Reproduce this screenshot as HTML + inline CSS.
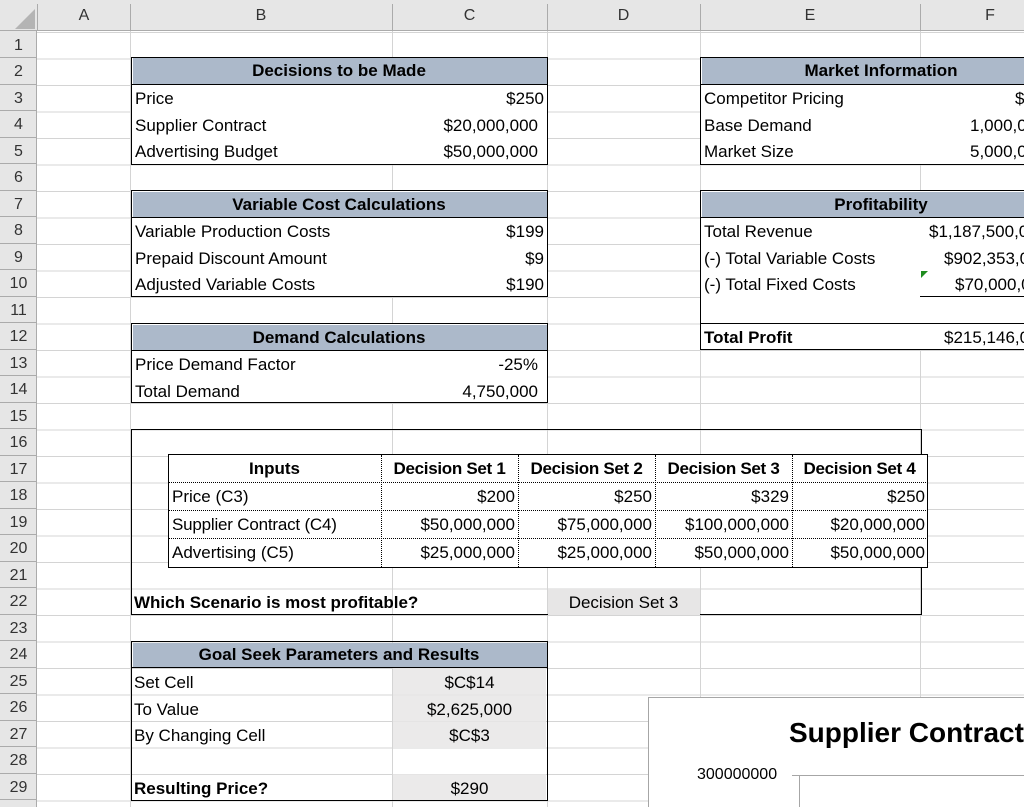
<!DOCTYPE html>
<html><head><meta charset="utf-8"><style>
*{margin:0;padding:0;box-sizing:border-box}
html,body{width:1024px;height:807px;overflow:hidden;background:#fff}
body{position:relative;font-family:"Liberation Sans",Arial,sans-serif;font-size:17px;color:#000}
.grid{position:absolute;left:0;top:31.5px;width:1024px;height:790px;
background-image:repeating-linear-gradient(to bottom,#d4d4d4 0,#d4d4d4 1px,transparent 1px,transparent 26.5px)}
.v{position:absolute;top:0;width:1px;height:807px;background:#d4d4d4}
.hdr{position:absolute;left:0;top:0;width:1024px;height:31px;background:#e6e6e6;border-bottom:1px solid #ababab}
.hl{position:absolute;top:0;height:31px;line-height:31px;text-align:center;color:#333;font-size:16px}
.hs{position:absolute;top:4px;width:1px;height:27px;background:#ababab}
.rh{position:absolute;left:0;top:31px;width:37px;height:776px;background:#e6e6e6;border-right:1px solid #ababab}
.rn{position:absolute;left:0;width:37px;text-align:center;height:26.5px;line-height:27px;color:#333;font-size:16px;border-bottom:1px solid #ababab}
.box{position:absolute;border:1.5px solid #000;background:#fff}
.fill{position:absolute;background:#acb9ca}
.gfill{position:absolute;background:#e7e6e6}
.t{position:absolute;height:26px;line-height:30px;white-space:nowrap}
.b{font-weight:bold}
.r{text-align:right}.c{text-align:center}
.hline{position:absolute;height:1.5px;background:#000}
</style></head><body>
<div class="grid"></div>
<div class="v" style="left:130px"></div><div class="v" style="left:392px"></div><div class="v" style="left:547px"></div><div class="v" style="left:700px"></div><div class="v" style="left:920px"></div>

<div class="hdr"></div>
<svg style="position:absolute;left:14px;top:8px" width="22" height="22"><polygon points="21,1 21,21 1,21" fill="#b4b4b4"/></svg>
<div class="hs" style="left:37px"></div><div class="hs" style="left:130px"></div><div class="hs" style="left:392px"></div><div class="hs" style="left:547px"></div><div class="hs" style="left:700px"></div><div class="hs" style="left:920px"></div>
<div class="hl" style="left:38px;width:92px">A</div>
<div class="hl" style="left:130px;width:262px">B</div>
<div class="hl" style="left:392px;width:155px">C</div>
<div class="hl" style="left:547px;width:153px">D</div>
<div class="hl" style="left:700px;width:220px">E</div>
<div class="hl" style="left:920px;width:140px">F</div>
<div class="rh"></div>
<div class="rn" style="top:31.5px">1</div><div class="rn" style="top:58px">2</div><div class="rn" style="top:84.5px">3</div><div class="rn" style="top:111px">4</div><div class="rn" style="top:137.5px">5</div><div class="rn" style="top:164px">6</div><div class="rn" style="top:190.5px">7</div><div class="rn" style="top:217px">8</div><div class="rn" style="top:243.5px">9</div><div class="rn" style="top:270px">10</div><div class="rn" style="top:296.5px">11</div><div class="rn" style="top:323px">12</div><div class="rn" style="top:349.5px">13</div><div class="rn" style="top:376px">14</div><div class="rn" style="top:402.5px">15</div><div class="rn" style="top:429px">16</div><div class="rn" style="top:455.5px">17</div><div class="rn" style="top:482px">18</div><div class="rn" style="top:508.5px">19</div><div class="rn" style="top:535px">20</div><div class="rn" style="top:561.5px">21</div><div class="rn" style="top:588px">22</div><div class="rn" style="top:614.5px">23</div><div class="rn" style="top:641px">24</div><div class="rn" style="top:667.5px">25</div><div class="rn" style="top:694px">26</div><div class="rn" style="top:720.5px">27</div><div class="rn" style="top:747px">28</div><div class="rn" style="top:773.5px">29</div><div class="rn" style="top:800px">30</div>

<div class="box" style="left:131px;top:56.5px;width:417px;height:108px"></div>
<div class="fill" style="left:132.5px;top:58px;width:414px;height:26px"></div>
<div class="hline" style="left:131px;top:83.5px;width:416px;height:1px"></div>
<div class="t b c" style="left:131px;top:56px;width:416px">Decisions to be Made</div>
<div class="t" style="left:135px;top:84px">Price</div><div class="t r" style="left:392px;top:84px;width:152px">$250</div>
<div class="t" style="left:135px;top:110.5px">Supplier Contract</div><div class="t r" style="left:392px;top:110.5px;width:146px">$20,000,000</div>
<div class="t" style="left:135px;top:137px">Advertising Budget</div><div class="t r" style="left:392px;top:137px;width:146px">$50,000,000</div>

<div class="box" style="left:700px;top:56.5px;width:340px;height:108px"></div>
<div class="fill" style="left:701.5px;top:58px;width:330px;height:26px"></div>
<div class="hline" style="left:700px;top:83.5px;width:330px;height:1px"></div>
<div class="t b c" style="left:700px;top:56px;width:362px">Market Information</div>
<div class="t" style="left:704px;top:84px">Competitor Pricing</div><div class="t" style="left:1015px;top:84px">$250</div>
<div class="t" style="left:704px;top:110.5px">Base Demand</div><div class="t" style="left:970px;top:110.5px">1,000,000</div>
<div class="t" style="left:704px;top:137px">Market Size</div><div class="t" style="left:970px;top:137px">5,000,000</div>

<div class="box" style="left:131px;top:190px;width:417px;height:107px"></div>
<div class="fill" style="left:132.5px;top:191.5px;width:414px;height:26px"></div>
<div class="hline" style="left:131px;top:216.5px;width:416px;height:1px"></div>
<div class="t b c" style="left:131px;top:189.5px;width:416px">Variable Cost Calculations</div>
<div class="t" style="left:135px;top:217px">Variable Production Costs</div><div class="t r" style="left:392px;top:217px;width:152px">$199</div>
<div class="t" style="left:135px;top:243.5px">Prepaid Discount Amount</div><div class="t r" style="left:392px;top:243.5px;width:152px">$9</div>
<div class="t" style="left:135px;top:270px">Adjusted Variable Costs</div><div class="t r" style="left:392px;top:270px;width:152px">$190</div>

<div class="box" style="left:700px;top:190px;width:340px;height:160px"></div>
<div class="fill" style="left:701.5px;top:191.5px;width:330px;height:26px"></div>
<div class="hline" style="left:700px;top:216.5px;width:330px;height:1px"></div>
<div class="hline" style="left:920px;top:296px;width:110px;height:1px"></div>
<div class="hline" style="left:700px;top:322.5px;width:330px"></div>
<div class="t b c" style="left:700px;top:189.5px;width:362px">Profitability</div>
<div class="t" style="left:704px;top:217px">Total Revenue</div><div class="t" style="left:929px;top:217px">$1,187,500,000</div>
<div class="t" style="left:704px;top:243.5px">(-) Total Variable Costs</div><div class="t" style="left:944px;top:243.5px">$902,353,000</div>
<div class="t" style="left:704px;top:270px">(-) Total Fixed Costs</div><div class="t" style="left:955px;top:270px">$70,000,000</div>
<svg style="position:absolute;left:921px;top:271px" width="8" height="8"><polygon points="0,0 7,0 0,7" fill="#1e8c1e"/></svg>
<div class="t b" style="left:704px;top:323px">Total Profit</div><div class="t" style="left:944px;top:323px">$215,146,000</div>

<div class="box" style="left:131px;top:323px;width:417px;height:80px"></div>
<div class="fill" style="left:132.5px;top:324.5px;width:414px;height:26px"></div>
<div class="hline" style="left:131px;top:349.5px;width:416px;height:1px"></div>
<div class="t b c" style="left:131px;top:322.5px;width:416px">Demand Calculations</div>
<div class="t" style="left:135px;top:350px">Price Demand Factor</div><div class="t r" style="left:392px;top:350px;width:146px">-25%</div>
<div class="t" style="left:135px;top:376.5px">Total Demand</div><div class="t r" style="left:392px;top:376.5px;width:146px">4,750,000</div>

<div style="position:absolute;left:131px;top:429px;width:791px;height:186px;border:1.5px solid #000;border-left-width:1px;background:transparent"></div>
<div style="position:absolute;left:168px;top:454px;width:760px;height:114px;background:#fff;border:1.5px solid #000"></div>
<div style="position:absolute;left:169px;top:482px;width:757px;border-top:1px dotted #000"></div>
<div style="position:absolute;left:169px;top:510px;width:757px;border-top:1px dotted #000"></div>
<div style="position:absolute;left:169px;top:538px;width:757px;border-top:1px dotted #000"></div>
<div style="position:absolute;left:381px;top:455px;height:112px;border-left:1px dotted #000"></div>
<div style="position:absolute;left:518px;top:455px;height:112px;border-left:1px dotted #000"></div>
<div style="position:absolute;left:655px;top:455px;height:112px;border-left:1px dotted #000"></div>
<div style="position:absolute;left:792px;top:455px;height:112px;border-left:1px dotted #000"></div>
<div class="t b c" style="left:168px;top:454px;width:213px">Inputs</div>
<div class="t b c" style="left:381px;top:454px;width:137px;letter-spacing:-0.3px">Decision Set 1</div>
<div class="t b c" style="left:518px;top:454px;width:137px;letter-spacing:-0.3px">Decision Set 2</div>
<div class="t b c" style="left:655px;top:454px;width:137px;letter-spacing:-0.3px">Decision Set 3</div>
<div class="t b c" style="left:792px;top:454px;width:135px;letter-spacing:-0.3px">Decision Set 4</div>
<div class="t" style="left:172px;top:482px">Price (C3)</div>
<div class="t r" style="left:381px;top:482px;width:134px">$200</div>
<div class="t r" style="left:518px;top:482px;width:134px">$250</div>
<div class="t r" style="left:655px;top:482px;width:134px">$329</div>
<div class="t r" style="left:792px;top:482px;width:133px">$250</div>
<div class="t" style="left:172px;top:510px;letter-spacing:-0.2px">Supplier Contract (C4)</div>
<div class="t r" style="left:381px;top:510px;width:134px">$50,000,000</div>
<div class="t r" style="left:518px;top:510px;width:134px">$75,000,000</div>
<div class="t r" style="left:655px;top:510px;width:134px">$100,000,000</div>
<div class="t r" style="left:792px;top:510px;width:133px">$20,000,000</div>
<div class="t" style="left:172px;top:538px">Advertising (C5)</div>
<div class="t r" style="left:381px;top:538px;width:134px">$25,000,000</div>
<div class="t r" style="left:518px;top:538px;width:134px">$25,000,000</div>
<div class="t r" style="left:655px;top:538px;width:134px">$50,000,000</div>
<div class="t r" style="left:792px;top:538px;width:133px">$50,000,000</div>
<div class="gfill" style="left:548px;top:588.5px;width:152px;height:26px"></div>
<div class="t b" style="left:134px;top:588px">Which Scenario is most profitable?</div>
<div class="t c" style="left:547px;top:588px;width:153px">Decision Set 3</div>

<div class="box" style="left:131px;top:641px;width:417px;height:160px;background:transparent"></div>
<div class="fill" style="left:132.5px;top:642.5px;width:414px;height:25px"></div>
<div class="gfill" style="left:393px;top:668px;width:153px;height:79px;opacity:.85"></div>
<div class="gfill" style="left:393px;top:774px;width:153px;height:25.5px;opacity:.85"></div>
<div class="hline" style="left:131px;top:667px;width:416px;height:1px"></div>
<div class="t b c" style="left:131px;top:640px;width:416px">Goal Seek Parameters and Results</div>
<div class="t" style="left:134px;top:668px">Set Cell</div><div class="t c" style="left:392px;top:668px;width:155px">$C$14</div>
<div class="t" style="left:134px;top:694.5px">To Value</div><div class="t c" style="left:392px;top:694.5px;width:155px">$2,625,000</div>
<div class="t" style="left:134px;top:721px">By Changing Cell</div><div class="t c" style="left:392px;top:721px;width:155px">$C$3</div>
<div class="t b" style="left:134px;top:774px">Resulting Price?</div><div class="t c" style="left:392px;top:774px;width:155px">$290</div>

<div style="position:absolute;left:648px;top:697px;width:400px;height:120px;background:#fff;border:1px solid #a6a6a6"></div>
<div class="t b" style="left:789px;top:715px;font-size:28px;height:36px;line-height:36px">Supplier Contract</div>
<div class="t" style="left:697px;top:760px;font-size:16px">300000000</div>
<div style="position:absolute;left:792px;top:775px;width:240px;height:1px;background:#a6a6a6"></div>
<div style="position:absolute;left:799px;top:775px;width:1px;height:40px;background:#a6a6a6"></div>
</body></html>
